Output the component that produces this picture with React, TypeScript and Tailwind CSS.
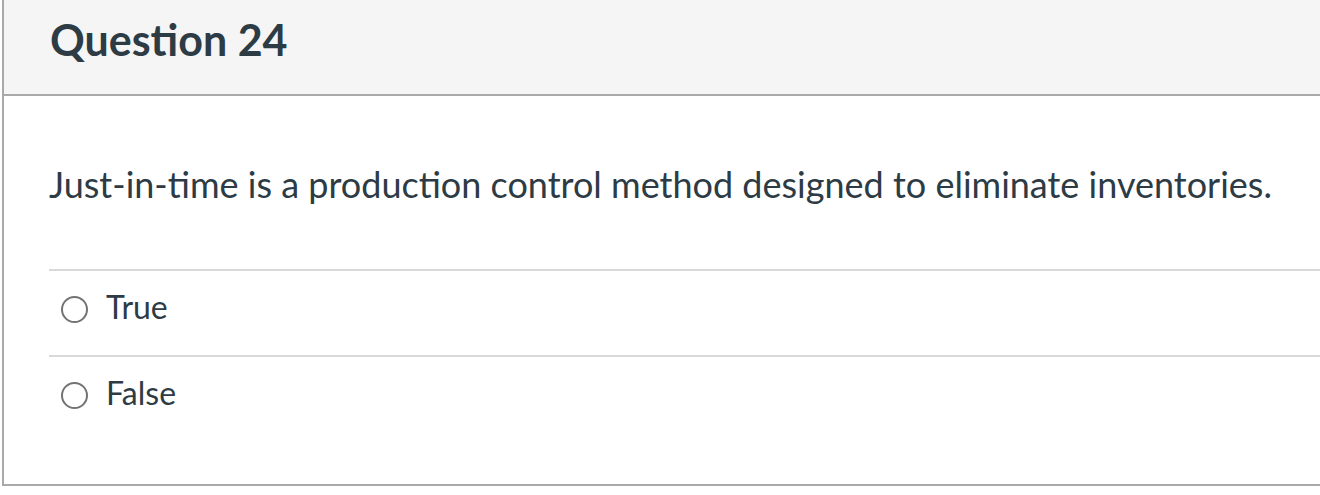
import React from 'react';

const answers = ['True', 'False'];

const App: React.FC = () => {
  return (
    <div className="w-[1320px] h-[495px] overflow-hidden bg-white text-[#2d3b45]" style={{ fontFamily: 'Lato, "Open Sans", sans-serif' }}>
      <div className="ml-[2px] w-[1340px] border-l-2 border-b-2 border-[#a9a9a9]">
        <div className="h-[96px] bg-[#f5f5f5] border-b-2 border-[#a9a9a9] pl-[46px] pt-[14px]">
          <h2 className="text-[43px] leading-[52px] font-bold">Question 24</h2>
        </div>
        <div className="pl-[45px]">
          <p className="pt-[66px] pb-[63px] text-[36px] leading-[44px]">
            Just-in-time is a production control method designed to eliminate inventories.
          </p>
          {answers.map((a) => (
            <div key={a} className="border-t-2 border-[#d9d9d9] h-[86px] flex items-center pb-[8px]">
              <span className="ml-[12px] w-[27px] h-[27px] rounded-full border-2 border-[#737373] bg-white" />
              <span className="ml-[18px] mb-[4px] text-[32px] leading-[40px]">{a}</span>
            </div>
          ))}
          <div className="h-[43px]" />
        </div>
      </div>
    </div>
  );
};

export default App;
